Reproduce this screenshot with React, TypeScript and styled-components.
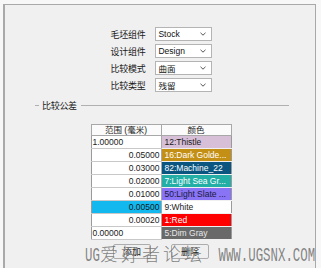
import React from 'react';
import styled, { createGlobalStyle } from 'styled-components';

const GlobalStyle = createGlobalStyle`
  html, body {
    margin: 0;
    padding: 0;
    background: #f7f7f7;
    overflow: hidden;
  }
  body {
    font-family: "Liberation Sans", "Noto Sans CJK SC", sans-serif;
  }
`;

interface ToleranceRow {
  value: string;
  color: string;
  bg: string;
  fg: string;
  alignLeft?: boolean;
  selected?: boolean;
}

const rows: ToleranceRow[] = [
  { value: '1.00000', color: '12:Thistle', bg: '#d8bfd8', fg: '#1a1a1a', alignLeft: true },
  { value: '0.05000', color: '16:Dark Golde...', bg: '#c38f14', fg: '#ffffff' },
  { value: '0.03000', color: '82:Machine_22', bg: '#0b5681', fg: '#ffffff' },
  { value: '0.02000', color: '7:Light Sea Gr...', bg: '#23aea6', fg: '#ffffff' },
  { value: '0.01000', color: '50:Light Slate ...', bg: '#8874f5', fg: '#1a1a40' },
  { value: '0.00500', color: '9:White', bg: '#ffffff', fg: '#1a1a1a', selected: true },
  { value: '0.00020', color: '1:Red', bg: '#ff0000', fg: '#ffffff' },
  { value: '0.00000', color: '5:Dim Gray', bg: '#696969', fg: '#e8e8e8', alignLeft: true },
];

const fields = [
  { label: '毛坯组件', value: 'Stock' },
  { label: '设计组件', value: 'Design' },
  { label: '比较模式', value: '曲面' },
  { label: '比较类型', value: '残留' },
];

const Chevron = () => (
  <svg width="6" height="4" viewBox="0 0 6 4">
    <path d="M0.5 0.8 L3 3.2 L5.5 0.8" fill="none" stroke="#555" strokeWidth="1" />
  </svg>
);

export default function App() {
  return (
    <>
      <GlobalStyle />
      <Frame>
        <Form>
          {fields.map((f) => (
            <React.Fragment key={f.label}>
              <Label>{f.label}</Label>
              <Combo>
                <span>{f.value}</span>
                <Chevron />
              </Combo>
            </React.Fragment>
          ))}
        </Form>

        <Group>
          <Dash />
          <GroupTitle>比较公差</GroupTitle>
          <Rule />
        </Group>

        <Table>
          <thead>
            <tr>
              <Head>范围 (毫米)</Head>
              <Head>颜色</Head>
            </tr>
          </thead>
          <tbody>
            {rows.map((r) => (
              <tr key={r.value}>
                <ValueCell $left={r.alignLeft} $selected={r.selected}>
                  {r.value}
                </ValueCell>
                <ColorCell $bg={r.bg} $fg={r.fg}>
                  {r.color}
                </ColorCell>
              </tr>
            ))}
          </tbody>
        </Table>

        <Buttons>
          <Button>添加</Button>
          <Button>删除</Button>
        </Buttons>

        <Watermark>
          <Latin $chars={2}>UG</Latin>
          <Cjk>爱好者论坛</Cjk>
          <Latin $chars={14}>&nbsp;WWW.UGSNX.COM</Latin>
        </Watermark>
      </Frame>
    </>
  );
}

const Frame = styled.div`
  position: relative;
  margin: 4px 0 0 3px;
  width: 313px;
  height: 264px;
  box-sizing: border-box;
  background: #f0f0f0;
  border-top: 1px solid #a9a9a9;
  border-left: 2px solid #a9a9a9;
  border-right: 1px solid #a9a9a9;
  padding-top: 22px;
  display: flex;
  flex-direction: column;
  align-items: center;
  overflow: hidden;
`;

const Form = styled.div`
  display: grid;
  grid-template-columns: auto 57px;
  grid-auto-rows: 14px;
  column-gap: 10px;
  row-gap: 3px;
  align-items: center;
  margin-left: 3px;
`;

const Label = styled.div`
  font-size: 9px;
  color: #1a1a1a;
  letter-spacing: -0.3px;
`;

const Combo = styled.div`
  height: 14px;
  box-sizing: border-box;
  background: #ffffff;
  border: 1px solid #b4b4b4;
  display: flex;
  align-items: center;
  justify-content: space-between;
  padding: 0 5px 0 2px;
  font-size: 8.5px;
  color: #111;
`;

const Group = styled.div`
  align-self: stretch;
  display: flex;
  align-items: center;
  margin: 8px 26px 0 30px;
  height: 10px;
`;

const Dash = styled.div`
  width: 4px;
  border-top: 1px solid #b0b0b0;
`;

const GroupTitle = styled.span`
  font-size: 9px;
  color: #1a1a1a;
  padding: 0 4px 0 3px;
  letter-spacing: -0.3px;
`;

const Rule = styled.div`
  flex: 1;
  border-top: 1px solid #b0b0b0;
`;

const Table = styled.table`
  margin-top: 14px;
  margin-left: 2px;
  border-collapse: collapse;
  table-layout: fixed;
  width: 138px;
  font-size: 8.5px;
  border: 1px solid #9a9a9a;
`;

const Head = styled.th`
  width: 69px;
  height: 10px;
  padding: 0;
  font-weight: normal;
  color: #1a1a1a;
  background: #fbfbfb;
  border: 1px solid #a8a8a8;
  line-height: 10px;
`;

const ValueCell = styled.td<{ $left?: boolean; $selected?: boolean }>`
  height: 12px;
  padding: 0 1px;
  line-height: 12px;
  text-align: ${(p) => (p.$left ? 'left' : 'right')};
  background: ${(p) => (p.$selected ? '#12b8ee' : '#ffffff')};
  color: #1a1a1a;
  border-bottom: 1px solid #c8c8c8;
  border-right: 1px solid #a8a8a8;
  white-space: nowrap;
`;

const ColorCell = styled.td<{ $bg: string; $fg: string }>`
  height: 12px;
  padding: 0 0 0 3px;
  line-height: 12px;
  background: ${(p) => p.$bg};
  color: ${(p) => p.$fg};
  border-bottom: 1px solid #f0f0f0;
  white-space: nowrap;
  overflow: hidden;
`;

const Buttons = styled.div`
  display: flex;
  gap: 20px;
  margin-top: 4px;
  margin-left: 2px;
`;

const Button = styled.button`
  width: 38px;
  height: 15px;
  padding: 0;
  font-family: "Noto Sans CJK SC", sans-serif;
  font-size: 9px;
  line-height: 13px;
  color: #1a1a1a;
  background: #efefef;
  border: 1px solid #adadad;
  border-radius: 2px;
`;

const Watermark = styled.div`
  position: absolute;
  left: 80px;
  top: 235px;
  display: flex;
  align-items: baseline;
  color: rgba(110, 110, 110, 0.85);
  pointer-events: none;
  white-space: nowrap;
`;

const Latin = styled.span<{ $chars: number }>`
  display: inline-block;
  font-family: "Liberation Mono", monospace;
  font-size: 20px;
  transform: scaleX(0.62);
  transform-origin: left center;
  margin-right: ${(p) => -p.$chars * 12 * 0.38}px;
`;

const Cjk = styled.span`
  font-family: "Noto Sans CJK SC", serif;
  font-weight: 300;
  font-size: 18px;
  letter-spacing: 3px;
  margin-right: 6px;
`;
